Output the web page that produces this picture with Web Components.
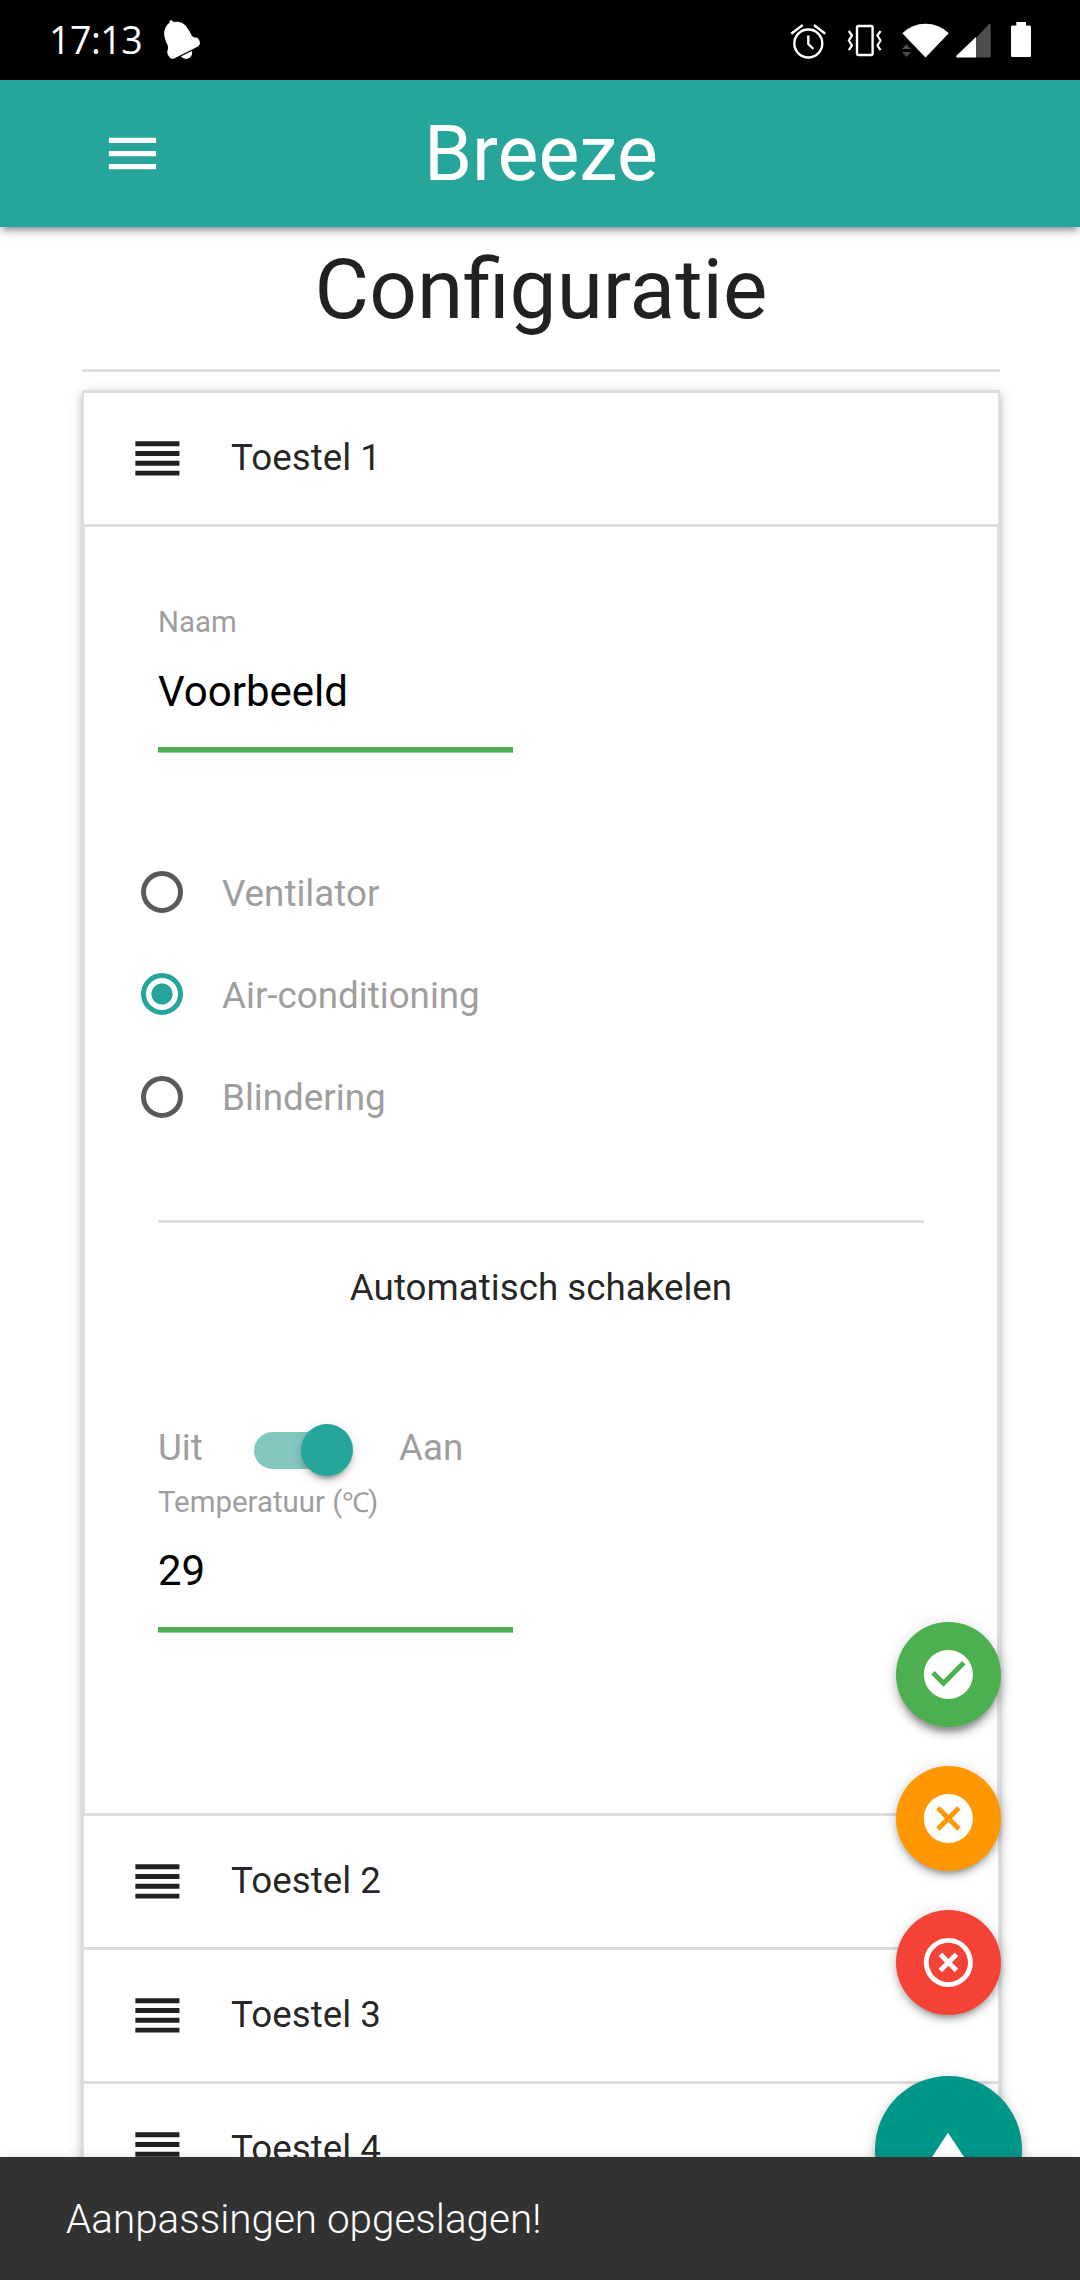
<!DOCTYPE html>
<html lang="nl">
<head>
<meta charset="utf-8">
<title>Breeze</title>
<style>
html,body{margin:0;padding:0;background:#fff}
body{width:1080px;height:2280px;overflow:hidden;font-family:Roboto,sans-serif;color:rgba(0,0,0,.87)}
</style>
</head>
<body>
<breeze-app></breeze-app>
<script>
const define = (name, html) => {
  const t = document.createElement('template');
  t.innerHTML = html;
  customElements.define(name, class extends HTMLElement {
    constructor() {
      super();
      this.attachShadow({ mode: 'open' }).append(t.content.cloneNode(true));
    }
  });
};

/* Material glyphs on a 24-unit grid */
const GLYPHS = {
  menu: 'M3 18h18v-2H3v2zm0-5h18v-2H3v2zm0-7v2h18V6H3z',
  reorder: 'M3 15h18v-2H3v2zm0 4h18v-2H3v2zm0-8h18V9H3v2zm0-6v2h18V5H3z',
  check_circle: 'M12 2C6.48 2 2 6.48 2 12s4.48 10 10 10 10-4.48 10-10S17.52 2 12 2zm-2 15l-5-5 1.41-1.41L10 14.17l7.59-7.59L19 8l-9 9z',
  cancel: 'M12 2C6.47 2 2 6.47 2 12s4.47 10 10 10 10-4.47 10-10S17.53 2 12 2zm5 13.59L15.59 17 12 13.41 8.41 17 7 15.59 10.59 12 7 8.41 8.41 7 12 10.59 15.59 7 17 8.41 13.41 12 17 15.59z',
  highlight_off: 'M14.59 8L12 10.59 9.41 8 8 9.41 10.59 12 8 14.59 9.41 16 12 13.41 14.59 16 16 14.59 13.41 12 16 9.41 14.59 8zM12 2C6.47 2 2 6.47 2 12s4.47 10 10 10 10-4.47 10-10S17.53 2 12 2zm0 18c-4.41 0-8-3.59-8-8s3.59-8 8-8 8 3.59 8 8-3.59 8-8 8z',
  arrow_up: 'M4.7 16h14.3L11.85 5.25z'
};
customElements.define('md-icon', class extends HTMLElement {
  connectedCallback() {
    if (this.shadowRoot) return;
    this.attachShadow({ mode: 'open' }).innerHTML =
      `<style>:host{display:block;width:var(--icon-size,58.8px);height:var(--icon-size,58.8px);flex:none}svg{display:block;width:100%;height:100%;fill:currentColor}</style>
       <svg viewBox="0 0 24 24"><path d="${GLYPHS[this.getAttribute('name')]}"/></svg>`;
  }
});

define('status-bar', `
<style>
:host{display:flex;align-items:center;height:80px;background:#000;color:#fff;position:relative;z-index:3}
.time{font:37.5px/80px "Open Sans",sans-serif;width:114px;padding-left:49px;letter-spacing:-.5px;box-sizing:content-box;white-space:nowrap}
.spacer{flex:1}
svg{display:block;height:80px;flex:none}
.line{fill:none;stroke:#fff;stroke-width:2.4}
</style>
<span class="time">17:13</span>
<svg width="40" viewBox="163 0 40 80" fill="#fff"><path d="M169.5 22.7Q169 20.3 171.3 20.3Q173 20.5 173.3 22.1Q181 20.5 186 26Q189 30 192 36Q194 38 197 37.6Q200.5 41 199.9 44Q199 46 196 47.5L174 58.4Q170.5 59.8 169 56.5Q166.5 53.5 167.6 50Q169 47 166.5 43Q163.5 36 164.3 31Q165.5 25.5 169.5 22.7Z"/><path d="M180.8 56.6L191.8 51Q193 54.5 190 57.6Q185.5 60.6 180.8 56.6Z"/></svg>
<span class="spacer"></span>
<svg width="50" viewBox="785 0 50 80"><g class="line"><circle cx="808.3" cy="43.5" r="14"/><path d="M791.3 33.8L802.7 25M813.9 25L825.3 33.8M808.3 35.5V44L813.5 49"/></g></svg>
<svg width="60" viewBox="835 0 60 80"><g class="line"><rect x="857" y="26" width="15.6" height="29" rx="1.5"/><path stroke-width="2.2" stroke-linejoin="round" d="M848.8 31l3.2 4.5l-3.2 5l3.2 5l-3.2 4.7M880.6 31l-3.2 4.5l3.2 5l-3.2 5l3.2 4.7"/></g></svg>
<svg width="57" viewBox="895 0 57 80"><path fill="#fff" d="M902.3 33.2Q912 23.7 925.5 23.7T948.8 33.2L925.5 57.6Z"/><path fill="#4d4d4d" d="M902 49L906.5 44.3L911 49ZM902 52h9L906.5 57Z"/></svg>
<svg width="50" viewBox="952 0 50 80"><path fill="#4d4d4d" d="M976 38L989 24Q990.7 22.5 990.7 25V56Q990.7 57.6 989 57.6H976Z"/><path fill="#fff" d="M976 37V57.6H957Q955.3 57 956.6 55.5Z"/></svg>
<svg width="78" viewBox="1002 0 78 80"><path fill="#fff" d="M1016.3 22h9.7v3.5h3.5q1.5 0 1.5 1.5v28.5q0 1.5-1.5 1.5h-17q-1.5 0-1.5-1.5V27q0-1.5 1.5-1.5h3.8z"/></svg>`);

define('nav-bar', `
<style>
:host{display:grid;grid-template-columns:1fr auto 1fr;align-items:center;height:147px;background:#26a69a;color:#fff;position:relative;z-index:2;
box-shadow:0 5.25px 5.25px 0 rgba(0,0,0,.14),0 7.9px 2.6px -5.25px rgba(0,0,0,.12),0 2.6px 13px 0 rgba(0,0,0,.2)}
md-icon{--icon-size:63px;margin-left:101px}
.brand{font-size:77.175px;line-height:147px;padding-left:2px}
</style>
<md-icon name="menu"></md-icon><span class="brand"><slot></slot></span>`);

define('page-title', `
<style>
:host{display:block;padding-top:16px;height:126px;text-align:center;border-bottom:3px solid #e0e0e0}
h4{margin:0;font-weight:400;font-size:83.79px;line-height:92px}
</style><h4><slot></slot></h4>`);

define('device-list', `
<style>
:host{display:block;margin-top:18px;border:solid #ddd;border-width:3px 2px 0;
box-shadow:0 5.25px 5.25px 0 rgba(0,0,0,.14),0 7.9px 2.6px -5.25px rgba(0,0,0,.12),0 2.6px 13px 0 rgba(0,0,0,.2)}
</style><slot></slot>`);

define('device-item', `
<style>
:host{display:block}
header{display:flex;align-items:center;gap:44px;height:131px;border-bottom:3px solid #ddd;padding-left:44.3px;background:#fff;font-size:36.75px;line-height:55px}
::slotted([slot=title]){margin-top:-2px}
.body{display:none}
:host([open]) .body{display:block;box-sizing:border-box;height:1289px;border:solid #ddd;border-width:0 1px 3px;padding:73px 73px 0}
</style>
<header><md-icon name="reorder"></md-icon><slot name="title"></slot></header>
<div class="body"><slot></slot></div>`);

define('text-field', `
<style>
:host{display:block;width:355px;border-bottom:5px solid #4caf50;padding-bottom:var(--pad,13px);box-shadow:0 1px 0 rgba(76,175,80,.6)}
.label{font-size:29.4px;line-height:44px;height:44px;color:#9e9e9e;white-space:nowrap}
.value{font-size:42px;line-height:84px;margin-top:var(--gap,6px);color:#000}
</style>
<div class="label"><slot name="label"></slot></div><div class="value"><slot></slot></div>`);

define('radio-option', `
<style>
:host{display:flex;align-items:center;gap:39px;height:102.3px;margin-left:-17px;color:#9e9e9e;font-size:36.75px}
i{box-sizing:border-box;width:42px;height:42px;border:5px solid #5a5a5a;border-radius:50%;flex:none}
:host([checked]) i{border-color:#26a69a;background:radial-gradient(circle,#26a69a 10.2px,transparent 10.9px)}
span{line-height:44px;padding-top:3.5px}
</style><i></i><span><slot></slot></span>`);

define('toggle-switch', `
<style>
:host{display:flex;align-items:center;height:56px;color:#9e9e9e;font-size:36.75px;line-height:52px}
.off{width:96px;margin-top:-4px}.on{margin-top:-4px}
.track{width:94.5px;height:37px;border-radius:19px;background:#84c7c1;display:flex;align-items:center;justify-content:flex-end;margin-right:50.5px}
.thumb{width:52.5px;height:52.5px;border-radius:50%;background:#26a69a;flex:none;margin-right:-4.5px;
box-shadow:0 7.9px 2.6px -5.25px rgba(0,0,0,.2),0 5.25px 5.25px 0 rgba(0,0,0,.14),0 2.6px 13px 0 rgba(0,0,0,.12)}
</style>
<span class="off"><slot name="off"></slot></span><div class="track"><div class="thumb"></div></div><span class="on"><slot name="on"></slot></span>`);

define('section-heading', `
<style>:host{display:block;border-top:3px solid #e0e0e0;padding-top:37px;text-align:center;font-size:36.75px;line-height:55px}</style><slot></slot>`);

define('fab-button', `
<style>
:host{display:flex;align-items:center;justify-content:center;width:105px;height:105px;border-radius:50%;color:#fff;background:var(--fab);
box-shadow:0 5.25px 5.25px 0 rgba(0,0,0,.14),0 7.9px 2.6px -5.25px rgba(0,0,0,.12),0 2.6px 13px 0 rgba(0,0,0,.2)}
:host([large]){width:147px;height:147px;margin-top:21.7px}
:host([raised]){box-shadow:0 8.6px 8.6px 0 rgba(0,0,0,.14),0 7.9px 4px -3px rgba(0,0,0,.22),0 2.6px 14px 0 rgba(0,0,0,.18)}
</style><slot></slot>`);

define('fab-menu', `
<style>:host{position:absolute;z-index:4;left:875px;top:1622px;display:flex;flex-direction:column;align-items:center;gap:39px}</style><slot></slot>`);

define('toast-message', `
<style>
:host{position:absolute;z-index:5;left:0;top:2157px;width:1080px;height:123px;box-sizing:border-box;padding:2px 0 0 66px;display:flex;align-items:center;background:#323232;color:#fff;font-size:40.43px;font-weight:300;line-height:61px;
box-shadow:0 5.25px 5.25px 0 rgba(0,0,0,.14),0 7.9px 2.6px -5.25px rgba(0,0,0,.12),0 2.6px 13px 0 rgba(0,0,0,.2)}
</style><slot></slot>`);

define('breeze-app', `
<style>
:host{display:block;position:relative;width:1080px;height:2280px;overflow:hidden}
main{margin:0 80px 0 82px}
.radios{padding-top:89px;height:379.5px;box-sizing:border-box;margin-bottom:88.5px}
toggle-switch{margin-top:107px;margin-bottom:2px}
.temp{--gap:5px;--pad:14px}
.unit{font-size:27.4px;line-height:1;letter-spacing:-.6px;margin-left:-.6px}
</style>
<status-bar></status-bar>
<nav-bar>Breeze</nav-bar>
<main>
  <page-title>Configuratie</page-title>
  <device-list>
    <device-item open>
      <span slot="title">Toestel 1</span>
      <text-field><span slot="label">Naam</span>Voorbeeld</text-field>
      <div class="radios">
        <radio-option>Ventilator</radio-option>
        <radio-option checked>Air-conditioning</radio-option>
        <radio-option>Blindering</radio-option>
      </div>
      <section-heading>Automatisch schakelen</section-heading>
      <toggle-switch><span slot="off">Uit</span><span slot="on">Aan</span></toggle-switch>
      <text-field class="temp"><span slot="label">Temperatuur (<span class="unit">℃</span>)</span>29</text-field>
    </device-item>
    <device-item><span slot="title">Toestel 2</span></device-item>
    <device-item><span slot="title">Toestel 3</span></device-item>
    <device-item><span slot="title">Toestel 4</span></device-item>
  </device-list>
</main>
<fab-menu>
  <fab-button raised style="--fab:#4caf50"><md-icon name="check_circle"></md-icon></fab-button>
  <fab-button style="--fab:#ff9800"><md-icon name="cancel"></md-icon></fab-button>
  <fab-button style="--fab:#f44336"><md-icon name="highlight_off"></md-icon></fab-button>
  <fab-button large style="--fab:#009688"><md-icon name="arrow_up"></md-icon></fab-button>
</fab-menu>
<toast-message>Aanpassingen opgeslagen!</toast-message>`);
</script>
</body>
</html>
